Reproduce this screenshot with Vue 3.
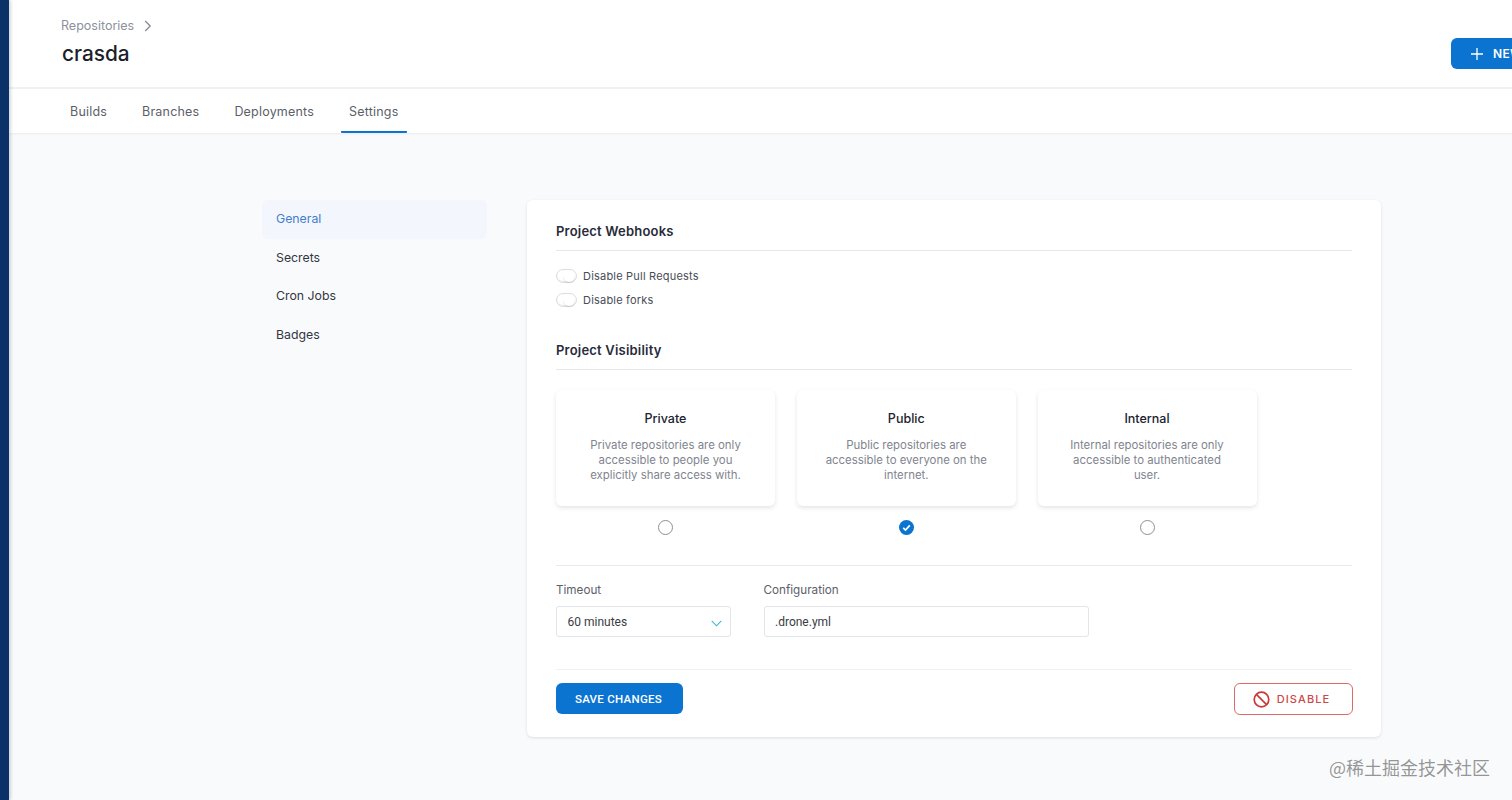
<script setup>
const tabs = ['Builds', 'Branches', 'Deployments', 'Settings']
const nav = ['General', 'Secrets', 'Cron Jobs', 'Badges']
const toggles = ['Disable Pull Requests', 'Disable forks']
const options = [
  { title: 'Private', text: 'Private repositories are only accessible to people you explicitly share access with.', on: false },
  { title: 'Public', text: 'Public repositories are accessible to everyone on the internet.', on: true },
  { title: 'Internal', text: 'Internal repositories are only accessible to authenticated user.', on: false }
]
</script>

<template>
  <div class="shell">
    <aside class="rail"></aside>
    <main class="main">
      <header class="head">
        <div class="head-text">
          <div class="crumb">
            <span>Repositories</span>
            <svg width="8" height="12" viewBox="0 0 8 12" fill="none" stroke="#868a94" stroke-width="1.3"><path d="M1.2 1 6.2 6 1.2 11" /></svg>
          </div>
          <h1>crasda</h1>
        </div>
        <button class="new">
          <svg width="12" height="12" viewBox="0 0 12 12" stroke="#fff" stroke-width="1.3"><path d="M6 0v12M0 6h12" /></svg>
          <span>NEW</span>
        </button>
      </header>
      <nav class="tabs">
        <a v-for="t in tabs" :key="t" class="tab" :class="{ active: t === 'Settings' }">{{ t }}</a>
      </nav>
      <section class="content">
        <ul class="side">
          <li v-for="n in nav" :key="n" :class="{ current: n === 'General' }">{{ n }}</li>
        </ul>
        <div class="card">
          <h2>Project Webhooks</h2>
          <div class="toggles">
            <label v-for="t in toggles" :key="t" class="toggle"><i></i><span>{{ t }}</span></label>
          </div>
          <h2 class="second">Project Visibility</h2>
          <div class="options">
            <div v-for="o in options" :key="o.title" class="option">
              <div class="box">
                <h3>{{ o.title }}</h3>
                <p>{{ o.text }}</p>
              </div>
              <svg v-if="o.on" class="radio" width="15" height="15" viewBox="0 0 15 15">
                <circle cx="7.5" cy="7.5" r="7.5" fill="#0b74d1" />
                <path d="M4.2 7.8 6.5 10 10.8 5.4" fill="none" stroke="#fff" stroke-width="1.7" />
              </svg>
              <span v-else class="radio empty"></span>
            </div>
          </div>
          <div class="fields">
            <div class="field timeout">
              <span class="lab">Timeout</span>
              <div class="input select">
                <span>60 minutes</span>
                <svg width="11" height="7" viewBox="0 0 11 7" fill="none" stroke="#38b6d8" stroke-width="1.1"><path d="M.7.8 5.5 5.8 10.3.8" /></svg>
              </div>
            </div>
            <div class="field config">
              <span class="lab">Configuration</span>
              <div class="input">.drone.yml</div>
            </div>
          </div>
          <div class="actions">
            <button class="save">SAVE CHANGES</button>
            <button class="disable">
              <svg width="17" height="17" viewBox="0 0 17 17" fill="none" stroke="#c93a3a" stroke-width="1.7"><circle cx="8.5" cy="8.5" r="7.3" /><path d="M3.4 3.4 13.6 13.6" /></svg>
              <span>DISABLE</span>
            </button>
          </div>
        </div>
      </section>
    </main>
    <div class="mark">@稀土掘金技术社区</div>
  </div>
</template>

<style>
html, body { margin: 0; overflow: hidden; }
</style>

<style scoped>
* { box-sizing: border-box; }
.shell { display: flex; width: 1512px; height: 800px; overflow: hidden; position: relative; font-family: Inter, "Noto Sans", sans-serif; background: #f9fafc; }
.rail { width: 9px; flex: none; background: #0a3268; box-shadow: 2px 0 3px rgba(30, 40, 60, .18); position: relative; z-index: 2; }
.main { flex: 1; min-width: 0; display: flex; flex-direction: column; }
.head { height: 89px; flex: none; background: #fff; border-bottom: 2px solid #f0f1f3; display: flex; padding-left: 52px; position: relative; }
.head-text { padding-top: 18px; }
.crumb { display: flex; align-items: center; gap: 10px; font-size: 12.5px; line-height: 16px; color: #8d919b; }
h1 { margin: 7px 0 0 1px; font-size: 20.8px; line-height: 26px; font-weight: 500; color: #1c1f2b; }
.new { position: absolute; left: 1442px; top: 38px; width: 130px; height: 31px; border: 0; border-radius: 6px; background: #0b74d1; color: #fff; font: 600 12px Inter, sans-serif; display: flex; align-items: center; gap: 10px; padding: 0 0 0 20px; letter-spacing: .3px; }
.tabs { height: 44px; flex: none; background: #fff; display: flex; padding-left: 53px; gap: 19px; box-shadow: 0 1px 2px rgba(30, 40, 60, .07); position: relative; }
.tab { padding: 0 8px; font-size: 12.5px; line-height: 45px; letter-spacing: .2px; color: #5c5f69; border-bottom: 2px solid transparent; border-radius: 1px; height: 44px; }
.active { border-bottom-color: #0b74d1; }
.content { flex: 1; display: flex; align-items: flex-start; padding: 67px 0 0 253px; gap: 40px; }
.side { width: 225px; flex: none; margin: 0; padding: 0; list-style: none; }
.side li { height: 38.5px; padding-left: 14px; font-size: 12.3px; line-height: 38.2px; color: #33363f; border-radius: 6px; }
.side .current { color: #3f80cb; background: #f4f6fd; }
.card { width: 854px; height: 537px; flex: none; background: #fff; border-radius: 6px; box-shadow: 0 1px 3px rgba(30, 40, 60, .13); padding: 22px 29px 0; }
h2 { margin: 0; height: 29px; font-size: 13px; line-height: 18px; font-weight: 600; color: #282b39; letter-spacing: .2px; border-bottom: 1px solid #e6e7ea; }
.second { margin-top: 33px; }
.toggles { padding-top: 17px; display: flex; flex-direction: column; gap: 8px; }
.toggle { display: flex; align-items: center; gap: 6px; height: 16px; font-size: 11px; letter-spacing: .2px; color: #484c56; }
.toggle i { width: 21px; height: 14px; border-radius: 8px; border: 1px solid #dcdde0; background: #fff; position: relative; box-shadow: inset 0 -1px 1px rgba(0, 0, 0, .08); }
.toggle i::after { content: ""; position: absolute; right: 1px; top: 0; width: 12px; height: 12px; border-radius: 50%; background: #fff; box-shadow: 0 1px 1px rgba(0, 0, 0, .12); }
.options { display: flex; gap: 21.75px; padding-top: 20px; }
.option { width: 219px; display: flex; flex-direction: column; align-items: center; }
.box { width: 219px; height: 116px; padding-top: 21px; border-radius: 6px; background: #fff; box-shadow: 0 2px 4px rgba(30, 40, 60, .12); text-align: center; }
h3 { margin: 0; font-size: 12.5px; line-height: 16px; font-weight: 500; color: #20232e; }
.box p { margin: 11px auto 0; width: 165px; font-size: 11.4px; line-height: 15px; color: #81848f; }
.radio { margin-top: 14px; width: 15px; height: 15px; }
.empty { border: 1px solid #8c8f96; border-radius: 50%; background: #fff; }
.fields { margin-top: 30px; border-top: 1px solid #e9eaed; height: 105px; border-bottom: 1px solid #eef0f2; display: flex; padding-top: 17px; gap: 32.5px; }
.field { display: flex; flex-direction: column; gap: 8px; }
.lab { font-size: 11.7px; line-height: 15px; color: #5d606a; }
.timeout { width: 175px; }
.config { width: 325.5px; }
.input { height: 31px; border: 1px solid #e4e5e9; border-radius: 3px; font: 12px/29px Roboto, sans-serif; color: #3a3c44; padding: 1px 0 0 10.5px; display: flex; align-items: center; justify-content: space-between; }
.select svg { margin: 3px 8px 0 0; }
.actions { display: flex; justify-content: space-between; margin-top: 13px; }
button { cursor: pointer; }
.save { width: 127px; height: 31px; padding: 0 2px 0 0; border: 0; border-radius: 6px; background: #0b74d1; color: #fff; font: 500 11.5px Roboto, sans-serif; letter-spacing: .28px; }
.disable { width: 119px; height: 32px; margin-right: -1px; padding: 0 4px 0 0; border: 1.4px solid #dc6a66; border-radius: 6px; background: #fff; color: #c94a4a; display: flex; align-items: center; justify-content: center; gap: 7px; font: 500 11px Inter, sans-serif; letter-spacing: 1.1px; }
.mark { position: absolute; left: 1329px; top: 756px; font: 18px/22px "Noto Sans CJK SC", sans-serif; color: rgba(110, 110, 110, .72); white-space: nowrap; }
</style>
